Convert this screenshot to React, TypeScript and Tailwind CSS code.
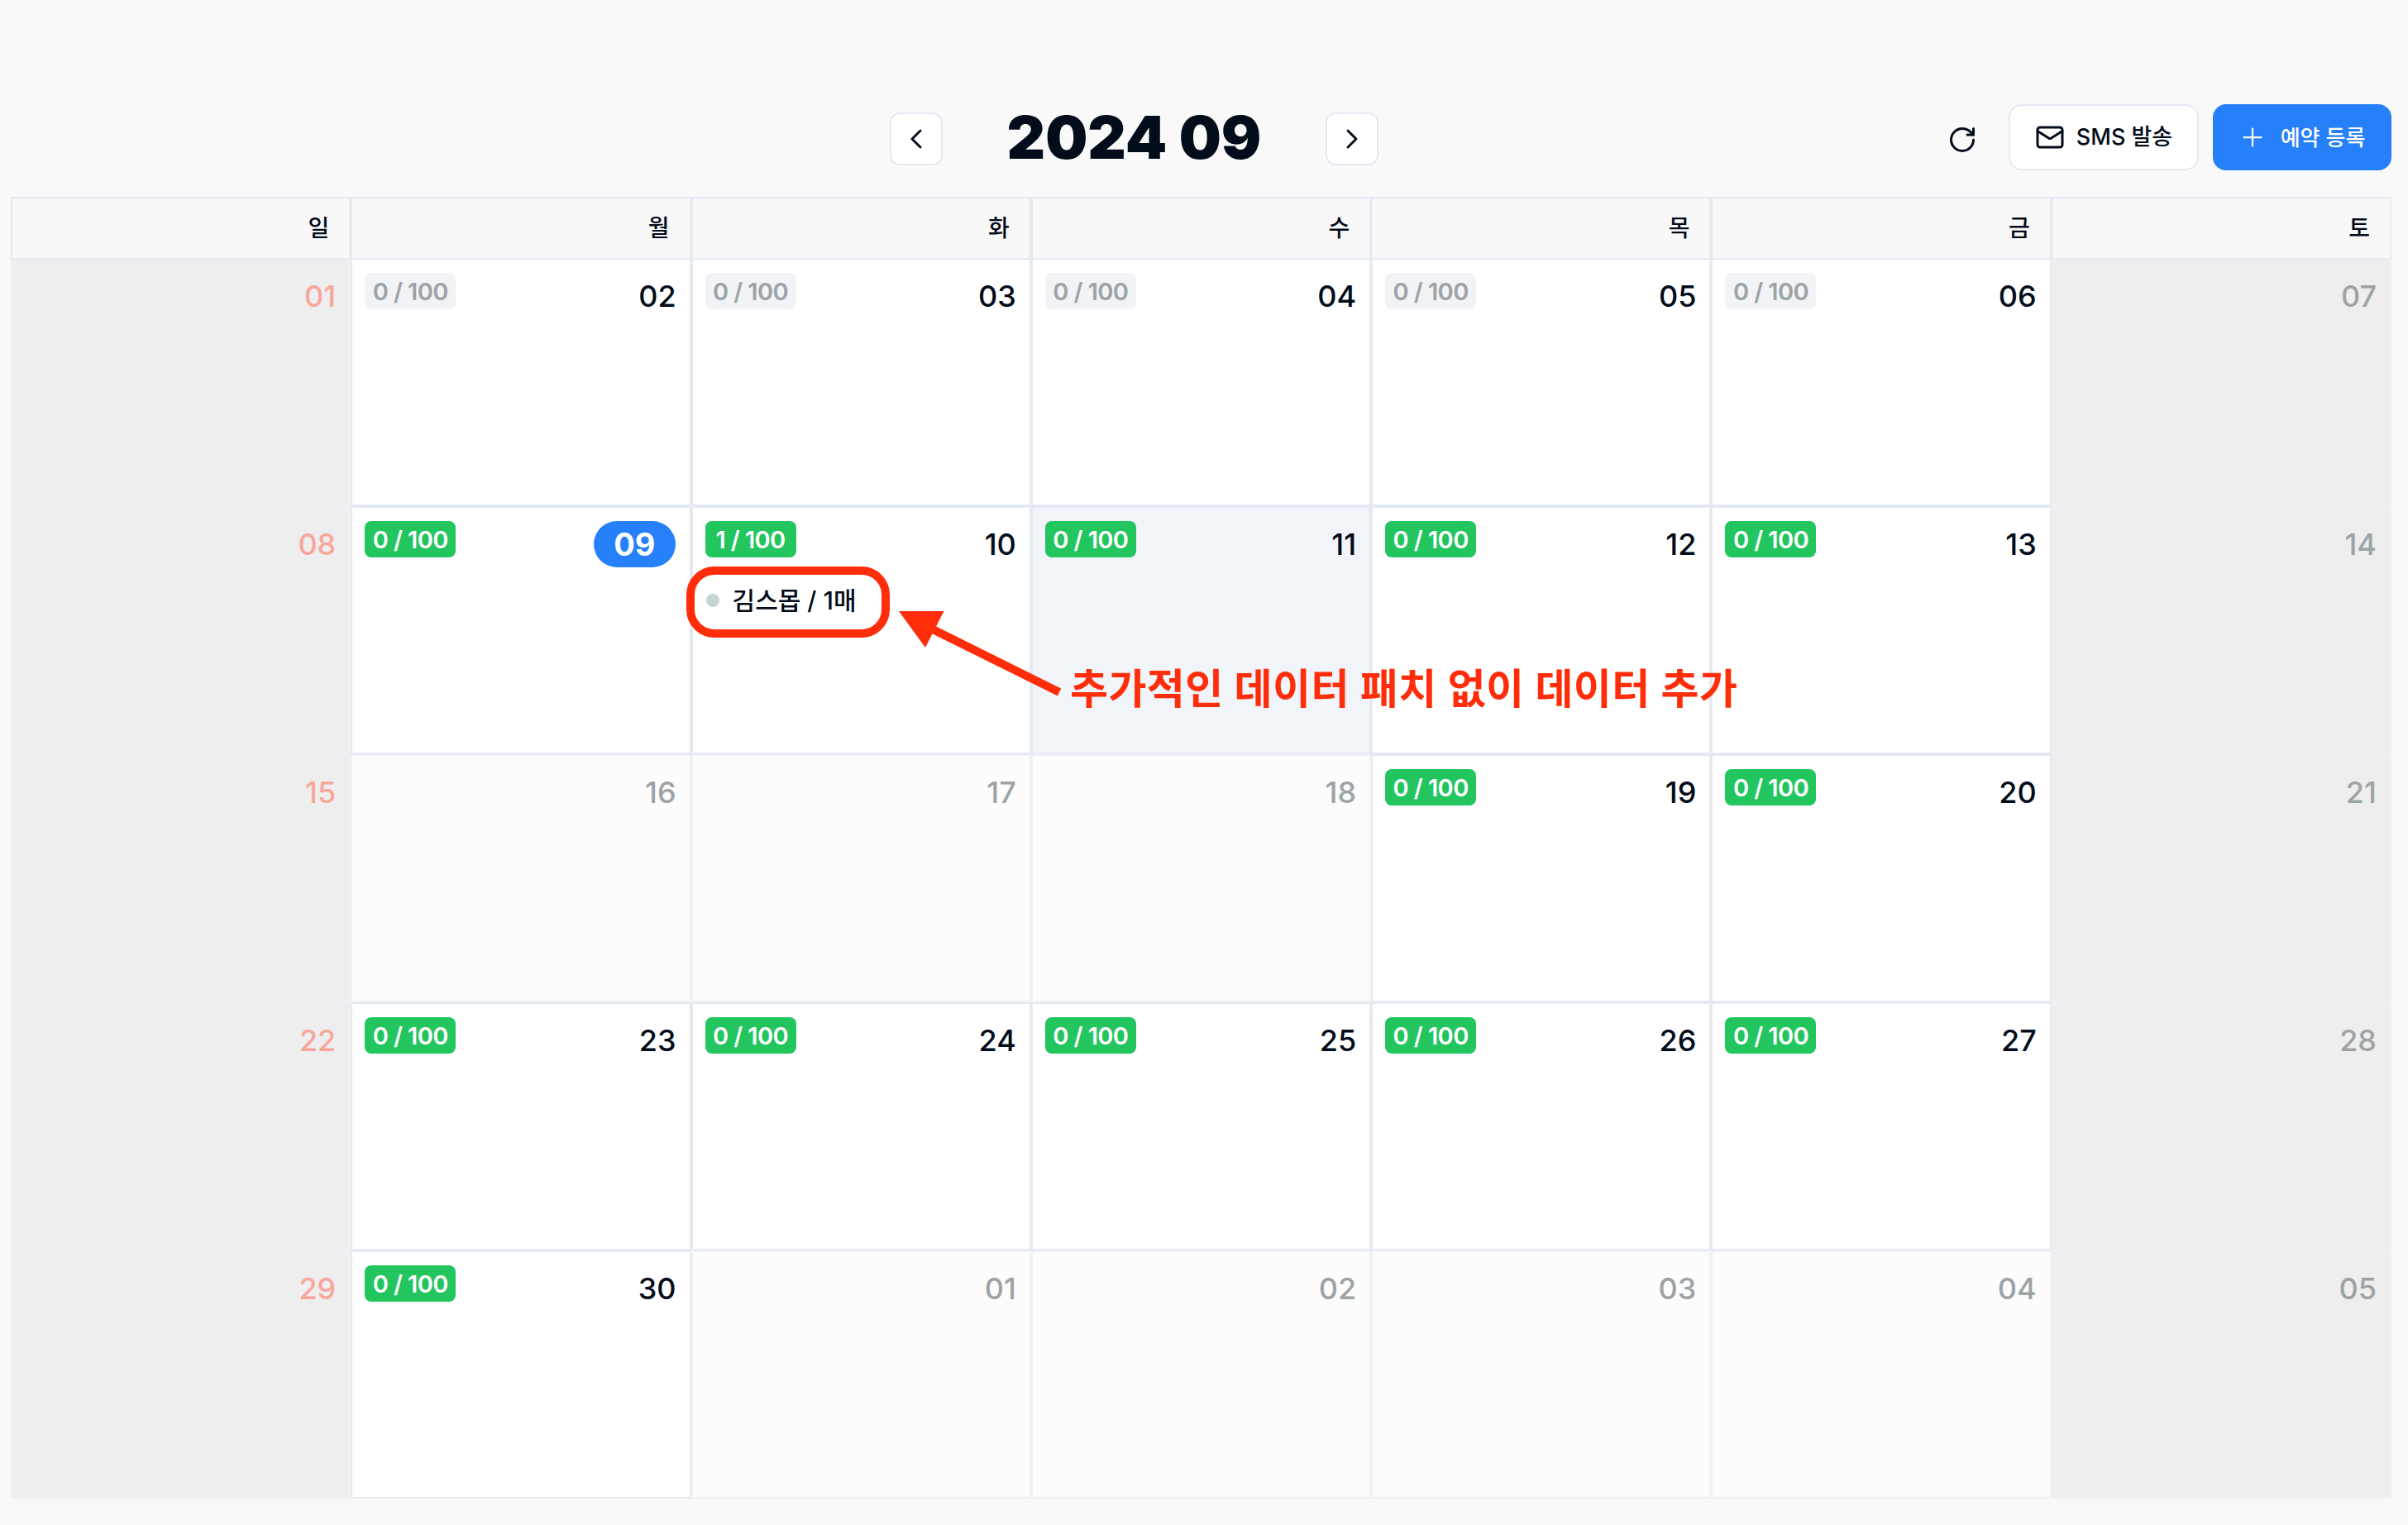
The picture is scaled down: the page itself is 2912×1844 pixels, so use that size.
import React from 'react';
import { ChevronLeft, ChevronRight, Mail, Plus, RotateCw } from 'lucide-react';

type CellKind = 'weekend' | 'active' | 'closed' | 'muted';

interface DayCell {
  day: string;
  kind: CellKind;
  count?: string;
  sunday?: boolean;
  today?: boolean;
  selected?: boolean;
  event?: string;
}

const WEEK_DAYS = ['일', '월', '화', '수', '목', '금', '토'];

const off = (day: string): DayCell => ({ day, kind: 'closed' });
const idle = (day: string): DayCell => ({ day, kind: 'muted', count: '0 / 100' });
const open = (day: string, count = '0 / 100'): DayCell => ({ day, kind: 'active', count });
const sun = (day: string): DayCell => ({ day, kind: 'weekend', sunday: true });
const sat = (day: string): DayCell => ({ day, kind: 'weekend' });

const CELLS: DayCell[] = [
  sun('01'), idle('02'), idle('03'), idle('04'), idle('05'), idle('06'), sat('07'),
  sun('08'),
  { ...open('09'), today: true },
  { ...open('10', '1 / 100'), event: '김스몹 / 1매' },
  { ...open('11'), selected: true },
  open('12'), open('13'), sat('14'),
  sun('15'), off('16'), off('17'), off('18'), open('19'), open('20'), sat('21'),
  sun('22'), open('23'), open('24'), open('25'), open('26'), open('27'), sat('28'),
  sun('29'), open('30'), off('01'), off('02'), off('03'), off('04'), sat('05'),
];

const CountBadge: React.FC<{ label: string; muted: boolean }> = ({ label, muted }) => (
  <span
    className={`flex h-[44px] w-[110px] items-center justify-center rounded-lg text-[29px] leading-none font-semibold tracking-[-0.6px] whitespace-nowrap ${
      muted ? 'bg-[#f1f3f6] text-[#9ca3a6]' : 'bg-[#22c55e] text-white'
    }`}
  >
    {label}
  </span>
);

const CalendarCell: React.FC<{ cell: DayCell; firstRow: boolean }> = ({ cell, firstRow }) => {
  const tone =
    cell.kind === 'weekend'
      ? 'bg-[#eeeeee] border-[#eef0f3]'
      : cell.kind === 'closed'
        ? 'bg-[#fcfcfc] border-[#eef1f6]'
        : cell.selected
          ? 'bg-[#f1f4f9] border-[#e5eaf2]'
          : 'bg-white border-[#e5eaf2]';

  const numberTone = cell.today
    ? 'bg-[#2680fa] text-white rounded-full h-[56px] mr-px px-[24px] text-[38px] font-bold'
    : cell.sunday
      ? 'text-[#f9a59c] mt-2 h-[40px] text-[36px] font-medium'
      : cell.kind === 'weekend' || cell.kind === 'closed'
        ? 'text-[#9ca3a6] mt-2 h-[40px] text-[36px] font-medium'
        : 'text-[#030c1a] mt-2 h-[40px] text-[36px] font-medium';

  return (
    <div className={`flex flex-col border-2 py-4 pr-4 pl-[15px] ${firstRow ? 'border-t-0' : ''} ${tone}`}>
      <div className="flex items-start justify-between">
        {cell.count ? <CountBadge label={cell.count} muted={cell.kind === 'muted'} /> : <span />}
        <span className={`flex items-center leading-none ${numberTone}`}>{cell.day}</span>
      </div>
      {cell.event && (
        <div className="mt-6 flex h-[48px] items-center gap-[16px] pl-px">
          <span className="h-4 w-4 rounded-full bg-[#c6d4d6]" />
          <span className="text-[30px] leading-none font-medium text-[#030c1a]">{cell.event}</span>
        </div>
      )}
    </div>
  );
};

const NavButton: React.FC<{ children: React.ReactNode }> = ({ children }) => (
  <button className="flex h-[64px] w-[64px] items-center justify-center rounded-xl border-2 border-[#e5eaf2] bg-white text-[#030c1a]">
    {children}
  </button>
);

const Annotation: React.FC = () => (
  <>
    <svg className="absolute top-0 left-0 h-[1844px] w-[2912px]" viewBox="0 0 2912 1844" fill="none">
      <rect x="835" y="690" width="236" height="76" rx="29" stroke="#ff2d0a" strokeWidth="10" />
      <path d="M1087 739 L1141.5 739 L1119 783 Z" fill="#ff2d0a" />
      <path d="M1126 760 L1281 837" stroke="#ff2d0a" strokeWidth="10" />
    </svg>
    <span className="absolute top-[801px] left-[1294px] text-[50px] leading-[64px] font-semibold tracking-[0.4px] whitespace-nowrap text-[#ff2d0a]">
      추가적인 데이터 패치 없이 데이터 추가
    </span>
  </>
);

export default function App() {
  return (
    <div
      className="relative h-[1844px] w-[2912px] overflow-hidden bg-[#f9f9fa] pr-[20px] pl-[13px]"
      style={{ fontFamily: 'Inter, "Noto Sans CJK KR", sans-serif' }}
    >
      <div className="flex h-[238px] items-start pt-[126px]">
        <div className="mt-2 ml-[1063px] flex w-[591px] items-center justify-between">
          <NavButton>
            <ChevronLeft size={40} strokeWidth={1.75} />
          </NavButton>
          <h1 className="mt-[-4px] text-[72px] leading-none font-black text-[#030c1a]">2024 09</h1>
          <NavButton>
            <ChevronRight size={40} strokeWidth={1.75} />
          </NavButton>
        </div>
        <div className="ml-auto flex items-center">
          <RotateCw size={36} strokeWidth={2} className="mt-[6px] mr-[38px] text-[#030c1a]" />
          <button className="flex h-[80px] w-[230px] items-center justify-center gap-[14px] rounded-2xl border-2 border-[#e5eaf2] bg-white text-[27px] font-medium text-[#030c1a]">
            <Mail size={36} strokeWidth={2} />
            SMS 발송
          </button>
          <button className="ml-[17px] flex h-[80px] w-[216px] items-center justify-center gap-[16px] rounded-2xl bg-[#2680fa] pr-[2px] text-[26px] font-medium text-white">
            <Plus size={36} strokeWidth={1.5} />
            예약 등록
          </button>
        </div>
      </div>

      <div className="grid h-[76px] grid-cols-7">
        {WEEK_DAYS.map((name) => (
          <div
            key={name}
            className="flex items-center justify-end border-2 border-[#e5eaf2] bg-[#f8f8f9] pr-[24px] text-[28px] font-medium text-[#030c1a]"
          >
            {name}
          </div>
        ))}
      </div>

      <div className="grid grid-cols-7 grid-rows-[298px_300px_300px_300px_300px]">
        {CELLS.map((cell, index) => (
          <CalendarCell key={index} cell={cell} firstRow={index < 7} />
        ))}
      </div>

      <Annotation />
    </div>
  );
}
